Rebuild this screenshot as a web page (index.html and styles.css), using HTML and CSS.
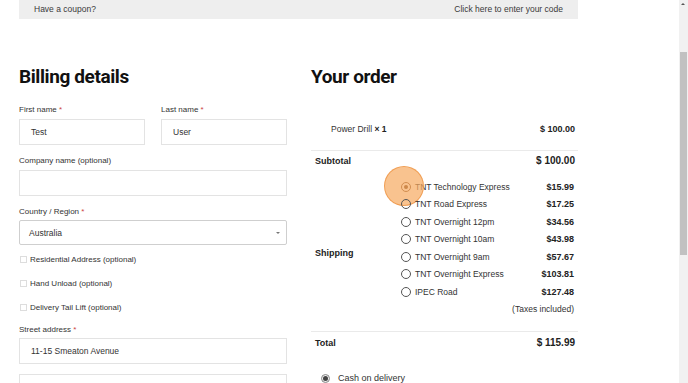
FILE: index.html
```html
<!DOCTYPE html>
<html lang="en">
<head>
<meta charset="utf-8">
<title>Checkout</title>
<link rel="stylesheet" href="styles.css">
</head>
<body>
<div class="screen">
  <main class="page">
    <div class="coupon">
      <span>Have a coupon?</span>
      <span>Click here to enter your code</span>
    </div>
    <div class="columns">
      <section class="billing">
        <h2>Billing details</h2>
        <div class="row2">
          <div class="field">
            <label>First name <span class="req">*</span></label>
            <div class="input">Test</div>
          </div>
          <div class="field">
            <label>Last name <span class="req">*</span></label>
            <div class="input">User</div>
          </div>
        </div>
        <div class="field">
          <label>Company name (optional)</label>
          <div class="input"></div>
        </div>
        <div class="field field-select">
          <label>Country / Region <span class="req">*</span></label>
          <div class="select">Australia<span class="caret"></span></div>
        </div>
        <div class="checks">
          <div class="check"><span class="box"></span>Residential Address (optional)</div>
          <div class="check"><span class="box"></span>Hand Unload (optional)</div>
          <div class="check"><span class="box"></span>Delivery Tail Lift (optional)</div>
        </div>
        <div class="field street">
          <label>Street address <span class="req">*</span></label>
          <div class="input">11-15 Smeaton Avenue</div>
        </div>
        <div class="field">
          <div class="input"></div>
        </div>
      </section>
      <section class="order">
        <h2>Your order</h2>
        <div class="order-table">
          <div class="product-row">
            <span class="pname">Power Drill <b>&times; 1</b></span>
            <b>$ 100.00</b>
          </div>
          <div class="subtotal-row">
            <b>Subtotal</b>
            <b class="amt">$ 100.00</b>
          </div>
          <div class="shipping-row">
            <b class="ship-label">Shipping</b>
            <div class="ship-options">
              <div class="opt selected"><span class="radio"><span class="dot"></span></span><span class="oname">TNT Technology Express</span><b>$15.99</b><span class="ripple"></span></div>
              <div class="opt"><span class="radio"></span><span class="oname">TNT Road Express</span><b>$17.25</b></div>
              <div class="opt"><span class="radio"></span><span class="oname">TNT Overnight 12pm</span><b>$34.56</b></div>
              <div class="opt"><span class="radio"></span><span class="oname">TNT Overnight 10am</span><b>$43.98</b></div>
              <div class="opt"><span class="radio"></span><span class="oname">TNT Overnight 9am</span><b>$57.67</b></div>
              <div class="opt"><span class="radio"></span><span class="oname">TNT Overnight Express</span><b>$103.81</b></div>
              <div class="opt"><span class="radio"></span><span class="oname">IPEC Road</span><b>$127.48</b></div>
              <div class="taxes">(Taxes included)</div>
            </div>
          </div>
          <div class="total-row">
            <b>Total</b>
            <b class="amt">$ 115.99</b>
          </div>
        </div>
        <div class="payment">
          <span class="pradio"><span class="pdot"></span></span>Cash on delivery
        </div>
      </section>
    </div>
  </main>
  <div class="scrollbar">
    <div class="sb-arrow"></div>
    <div class="sb-thumb"></div>
  </div>
</div>
</body>
</html>
```

FILE: styles.css
```css
* { box-sizing: border-box; }
html, body { margin: 0; padding: 0; }
body {
  font-family: "Liberation Sans", Arial, sans-serif;
  font-size: 8.5px;
  color: #333;
  background: #fff;
  overflow: hidden;
}
.screen {
  display: flex;
  width: 688px;
  height: 383px;
  overflow: hidden;
}
.page {
  flex: 1;
  padding-left: 19px;
}
.coupon {
  width: 559px;
  height: 19px;
  background: #eeeeee;
  display: flex;
  justify-content: space-between;
  align-items: center;
  padding: 0 15px 1px 15px;
  color: #3a3a3a;
}
.columns {
  display: flex;
  gap: 24px;
  margin-top: 46px;
}
h2 {
  font-family: Roboto, "Liberation Sans", sans-serif;
  font-weight: 700;
  font-size: 19px;
  line-height: 24px;
  letter-spacing: -0.4px;
  color: #111;
  margin: 0;
}
.billing { width: 268px; }
.billing h2 { margin-bottom: 15px; }
.row2 { display: flex; gap: 16px; }
.row2 .field { flex: 1; }
.field { margin-bottom: 10px; }
label {
  display: block;
  font-size: 8px;
  line-height: 12px;
  margin-bottom: 3px;
  color: #333;
}
.req { color: #c44; }
.input {
  height: 26px;
  border: 1px solid #e3e3e3;
  padding: 0 11px;
  display: flex;
  align-items: center;
  color: #333;
}
.select {
  height: 25px;
  border: 1px solid #cfcfcf;
  border-radius: 2px;
  padding: 0 9px;
  display: flex;
  align-items: center;
  justify-content: space-between;
  margin-top: -1px;
}
.caret {
  width: 0; height: 0;
  border-left: 2px solid transparent;
  border-right: 2px solid transparent;
  border-top: 2px solid #777;
  margin-right: -3px;
}
.field-select { margin-bottom: 2px; }
.checks { display: flex; flex-direction: column; }
.check {
  height: 24px;
  display: flex;
  align-items: center;
  font-size: 8px;
  color: #333;
}
.box {
  width: 7px; height: 7px;
  border: 1px solid #ddd;
  margin: 0 3px 0 1px;
}
.street { margin-top: 5px; }
.street label { margin-bottom: 2px; }

.order { width: 267px; }
.order-table { margin-top: 22px; }
.order-table b { font-weight: 700; color: #222; }
.product-row {
  display: flex;
  justify-content: space-between;
  padding: 12px 3px 15px 20px;
  line-height: 12px;
  border-bottom: 1px solid #eaeaea;
}
.product-row > b { font-size: 9px; }
.pname b { font-weight: 700; }
.subtotal-row {
  display: flex;
  justify-content: space-between;
  padding: 4px 3px 3px 4px;
  line-height: 12px;
  font-size: 9px;
}
.amt { font-size: 10px; }
.shipping-row {
  display: flex;
  align-items: center;
  padding: 8px 4px 16px 4px;
  border-bottom: 1px solid #eaeaea;
}
.ship-label { width: 86px; font-size: 9px; margin-top: 12px; }
.ship-options { flex: 1; }
.opt {
  position: relative;
  display: flex;
  align-items: center;
  height: 17.5px;
  font-size: 8.5px;
  color: #333;
}
.opt b { margin-left: auto; font-size: 9px; }
.radio {
  width: 10px; height: 10px;
  border: 1px solid #555;
  border-radius: 50%;
  margin-right: 4px;
  display: flex;
  align-items: center;
  justify-content: center;
}
.dot { width: 4px; height: 4px; border-radius: 50%; background: #6b3a1a; }
.selected .radio { border-color: #7a4a2a; }
.ripple {
  position: absolute;
  left: -17px;
  top: -12px;
  width: 40px;
  height: 40px;
  border-radius: 50%;
  background: rgba(246, 170, 96, 0.7);
  border: 1px solid rgba(238, 146, 64, 0.75);
}
.taxes {
  text-align: right;
  line-height: 12px;
  margin-top: 2.5px;
  color: #333;
}
.total-row {
  display: flex;
  justify-content: space-between;
  padding: 5px 3px 0 4px;
  line-height: 12px;
  font-size: 9px;
}
.payment {
  display: flex;
  align-items: center;
  margin-top: 24px;
  padding-left: 10px;
  color: #333;
  font-size: 9px;
}
.pradio {
  width: 9px; height: 9px;
  border-radius: 50%;
  border: 1px solid #888;
  background: #eee;
  display: flex; align-items: center; justify-content: center;
  margin-right: 8px;
}
.pdot { width: 5px; height: 5px; border-radius: 50%; background: #444; }

.scrollbar {
  width: 9px;
  height: 383px;
  background: #f1f1f1;
  position: relative;
}
.sb-arrow {
  position: absolute;
  left: 2px; top: 3px;
  width: 0; height: 0;
  border-left: 2px solid transparent;
  border-right: 2px solid transparent;
  border-bottom: 2px solid #555;
}
.sb-thumb {
  position: absolute;
  left: 1px; top: 52px;
  width: 7px; height: 203px;
  background: #c1c1c1;
}
```
